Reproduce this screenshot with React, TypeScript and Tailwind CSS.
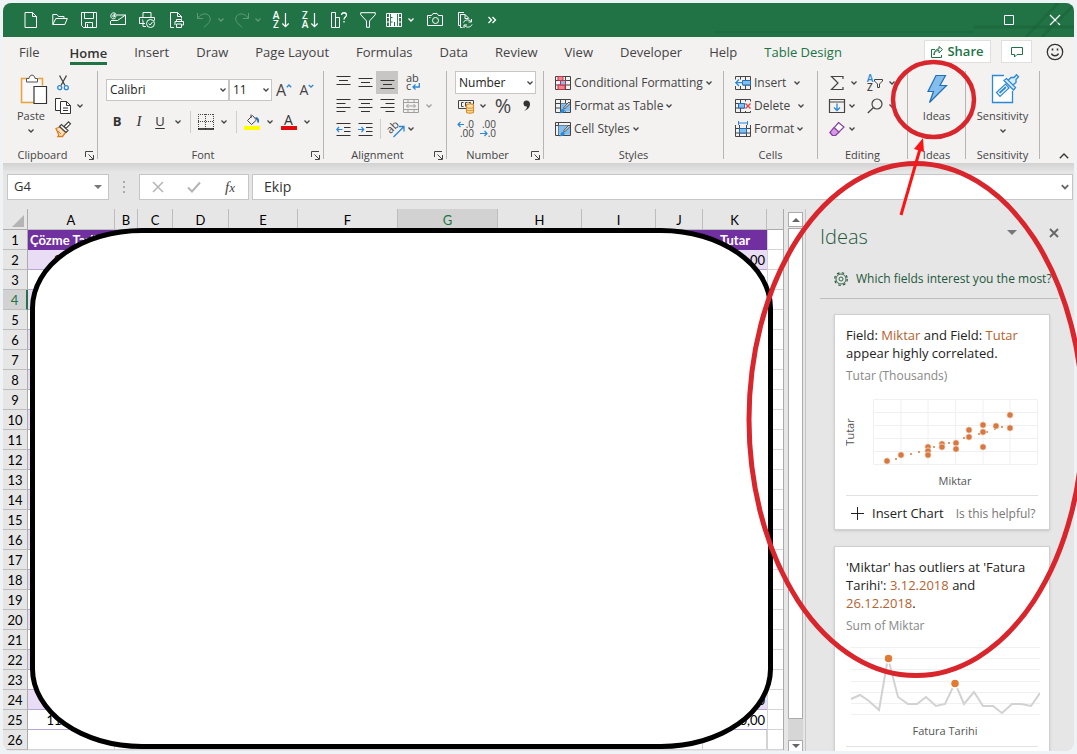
import React from 'react'

type IconProps = {
  children: React.ReactNode
  className?: string
  box?: string
}

const Icon: React.FC<IconProps> = ({ children, className = 'size-4', box = '0 0 16 16' }) => (
  <svg viewBox={box} className={`shrink-0 overflow-visible ${className}`} fill="none" stroke="currentColor" aria-hidden="true">
    {children}
  </svg>
)

const Chevron = ({ className = 'text-[#444]' }: { className?: string }) => (
  <svg viewBox="0 0 8 6" className={`w-2 h-1.5 shrink-0 ${className}`} fill="none" stroke="currentColor" strokeWidth="1.3" aria-hidden="true">
    <path d="M1.5 1.5 4 4l2.5-2.5" />
  </svg>
)

type ToolProps = {
  label: string
  className?: string
  children: React.ReactNode
}

const Tool = ({ label, className = 'w-[22px] h-[23px]', children }: ToolProps) => (
  <button type="button" aria-label={label} className={`flex shrink-0 items-center justify-center ${className}`}>
    {children}
  </button>
)

/* ---------- title bar ---------- */

const SortIcon = ({ top, bottom }: { top: string; bottom: string }) => (
  <Icon>
    <text x="3" y="7" fontSize="10" fontWeight="600" fill="currentColor" stroke="none" textAnchor="middle">{top}</text>
    <text x="3" y="16" fontSize="10" fontWeight="600" fill="currentColor" stroke="none" textAnchor="middle">{bottom}</text>
    <path d="M12.500 1v13.500M9.300 11.500l3.200 3.200 3.200-3.200" strokeWidth="1.200" />
  </Icon>
)

const TitleBar = () => (
  <header className="relative flex h-[34px] shrink-0 items-center bg-[#217346] pl-[13px] text-white">
    {/* faint window pattern */}
    <svg viewBox="0 0 420 34" className="pointer-events-none absolute right-0 top-0 h-[34px] w-[420px]" fill="none" stroke="#1b643b" aria-hidden="true">
      <path d="M320 24h100" strokeWidth="3" opacity=".6" />
      <path d="m372 34 32-34M388 34l32-32" strokeWidth="3" opacity=".6" />
      <path d="M60 29h260" strokeWidth="2" opacity=".4" />
    </svg>
    <Tool label="New" className="w-[29px] h-8">
      <Icon><path d="M2 .5h7.500l4 4v11H2zM9.500.5v4h4" /></Icon>
    </Tool>
    <Tool label="Open" className="w-[29px] h-8">
      <Icon><path d="M.8 12.500v-10H5l1.500 2h5.500v2M.8 12.500l3-6h11.500l-2.500 6z" /></Icon>
    </Tool>
    <Tool label="Save" className="w-[29px] h-8">
      <Icon><path d="M.5.5h15v15h-13l-2-2zM3.500.5v6h9v-6M4.500 15.500v-5h7v5M6.500 12v3.500" /></Icon>
    </Tool>
    <Tool label="Email" className="w-[29px] h-8">
      <Icon>
        <path d="M7 3h8.500v9.500H.5V9M7.500 8.500l8-5.500" />
        <path d="M5.500 6C4 7.500.8 7 .8 3.800.8.200 6.200-.2 6.200 3.300c0 2-1.500 2-1.500.7V2M4.700 4c0 1.500-2 1.500-2 0s2-1.500 2 0M1 8.500h6.500" />
      </Icon>
    </Tool>
    <Tool label="Quick Print" className="w-[29px] h-8">
      <Icon>
        <path d="M4 5.500v-5h8v5M6 11.500H.5v-6h15v3M4 8.500v6h3M3 8h1" />
        <circle cx="11.500" cy="11.500" r="4" />
        <path d="m9.700 11.500 1.500 1.500 2.300-3" />
      </Icon>
    </Tool>
    <Tool label="Print Preview" className="w-[30px] h-8">
      <Icon>
        <path d="M6 15.500H2.500V.5h7l4 4v2M9.500.5v4h4" />
        <path d="M8.500 9.500v-2h5v2M7 13V9.500h8.500V13h-2M8.500 12h5v3.500h-5z" />
      </Icon>
    </Tool>
    <Tool label="Undo" className="w-[26px] h-8 text-[#5d9b79]">
      <Icon><path d="M1.500 1v5.500H7M1.500 6.500C4 2.500 8 1 11.500 2.500c3 1.500 3.500 5.500 1.500 8l-5 5" /></Icon>
    </Tool>
    <Chevron className="text-[#5d9b79]" />
    <Tool label="Redo" className="w-[33px] h-8 text-[#5d9b79]">
      <Icon><path d="M14.500 1v5.500H9M14.500 6.500C12 2.500 8 1 4.500 2.500c-3 1.500-3.500 5.500-1.500 8l5 5" /></Icon>
    </Tool>
    <Chevron className="-ml-1 text-[#5d9b79]" />
    <Tool label="Sort Ascending" className="ml-1 w-[30px] h-8">
      <SortIcon top="A" bottom="Z" />
    </Tool>
    <Tool label="Sort Descending" className="w-[28px] h-8">
      <SortIcon top="Z" bottom="A" />
    </Tool>
    <Tool label="Chart Help" className="w-[30px] h-8">
      <Icon>
        <path d="M.5.5h4v15h-4zM4.500 5.500h4v10h-4" />
        <path d="M10.500 3c0-3 5-3 5 0 0 2-2.500 2-2.500 4.500M13 9v1.500" strokeWidth="1.300" />
      </Icon>
    </Tool>
    <Tool label="Filter" className="w-[27px] h-8">
      <Icon><path d="M.7.7h14.600v2L9.500 9v6.300h-3V9L.7 2.700z" /></Icon>
    </Tool>
    <Tool label="Freeze Panes" className="w-[25px] h-8">
      <Icon>
        <path d="M.5 1.500h15v13H.5z" />
        <path d="M5 2h6v12H5z" fill="currentColor" stroke="none" />
        <path d="M3.500 1.500v13M12.500 1.500v13M.5 5.500h3M.5 10h3M12.500 5.500h3M12.500 10h3" strokeWidth="1.200" />
        <path d="M8.500 10v4M5 5.500h1.500M5 10h1.500" stroke="#217346" />
      </Icon>
    </Tool>
    <Chevron className="ml-px text-white" />
    <Tool label="Camera" className="ml-[5px] w-[30px] h-8">
      <Icon>
        <path d="M.5 3.500h4l1.500-2h4l1.500 2h4v10H.5z" />
        <circle cx="8.500" cy="8.500" r="3" />
        <path d="M2 5.500h1.500" />
      </Icon>
    </Tool>
    <Tool label="Refresh All" className="w-[29px] h-8">
      <Icon>
        <path d="M3 13.500H1.500V.5H7M5.500 15.500h-2V2.500h4.500l4 4M8 2.500v4h3.500" />
        <path d="M6.500 10.500c1-3 5.500-3.500 7.500-1M14.500 7v3h-3M15 12.500c-1 3-5.500 3.500-7.500 1M7 16v-3h3" />
      </Icon>
    </Tool>
    <Tool label="More commands" className="w-[26px] h-8">
      <Icon className="w-2.5 h-2" box="0 0 10 8"><path d="m1.500 1 3 3-3 3M5.500 1l3 3-3 3" strokeWidth="1.300" /></Icon>
    </Tool>
    <div className="flex-1" />
    <Tool label="Maximize" className="w-[54px] h-8">
      <Icon className="w-2.5 h-2.5" box="0 0 10 10"><path d="M.5.5h9v9h-9z" /></Icon>
    </Tool>
    <Tool label="Close" className="w-[38px] h-8">
      <Icon className="w-3 h-3" box="0 0 12 12"><path d="m1 1 10 10m0-10L1 11" strokeWidth="1.200" /></Icon>
    </Tool>
  </header>
)

/* ---------- tabs ---------- */

const TABS = ['File', 'Home', 'Insert', 'Draw', 'Page Layout', 'Formulas', 'Data', 'Review', 'View', 'Developer', 'Help', 'Table Design']

const TabBar = () => (
  <div className="flex h-[29px] shrink-0 items-center bg-[#f3f2f1] pl-4 pr-2.5 text-[13px]">
    <nav className="flex flex-1 items-center gap-[27px] whitespace-nowrap">
      {TABS.map((tab) => {
        if (tab === 'Home') {
          return (
            <button key={tab} type="button" className="ml-[3px] h-[27px] border-b-3 border-[#217346] pt-[3px] font-semibold leading-6 text-[#333]">
              {tab}
            </button>
          )
        }
        return (
          <button key={tab} type="button" className={`leading-6 ${tab === 'Table Design' ? 'text-[#217346]' : 'text-[#444]'}`}>
            {tab}
          </button>
        )
      })}
    </nav>
    <button type="button" className="flex h-[23px] w-[67px] items-center justify-center gap-1 border border-[#e1dfdd] bg-white font-semibold text-[#217346]">
      <Icon className="size-3" box="0 0 12 12">
        <path d="M4 3.500H.5v8h10V9M3 9c0-3 2-4.500 5-4.500V7L11.500 3.500 8 .5V3C5 3 3 5 3 9z" />
      </Icon>
      Share
    </button>
    <Tool label="Comments" className="ml-2.5 h-[23px] w-[31px] border border-[#e1dfdd] bg-white text-[#217346]">
      <Icon className="w-3 h-3" box="0 0 12 12"><path d="M.5 1.500h11v7H6L3.500 11V8.500h-3z" /></Icon>
    </Tool>
    <Tool label="Feedback" className="ml-[14px] h-[23px] w-[18px] text-[#333]">
      <Icon className="size-[18px]" box="0 0 18 18">
        <circle cx="9" cy="9" r="7.700" strokeWidth="1.300" />
        <path d="M5.500 10.500c1 3 6 3 7 0" strokeWidth="1.300" />
        <path d="M6.500 5.500v2M11.500 5.500v2" strokeWidth="1.600" />
      </Icon>
    </Tool>
  </div>
)

/* ---------- ribbon ---------- */

type GroupProps = {
  title: string
  width: string
  launcher?: boolean
  children: React.ReactNode
}

const Group: React.FC<GroupProps> = ({ title, width, launcher = false, children }) => (
  <>
    <section aria-label={title} className={`shrink-0 ${width}`}>
      <div className="h-[76px]">{children}</div>
      <div className="flex h-4 items-center text-[11px] text-[#444]">
        <span className="flex-1 text-center">{title}</span>
        {launcher && (
          <Tool label={`${title} settings`} className="w-[15px] h-4">
            <Icon className="size-[9px]" box="0 0 9 9"><path d="M.5 6V.5H8M3.500 3.500l4.500 4.500M8.500 4v4.500H4" /></Icon>
          </Tool>
        )}
      </div>
    </section>
    <div className="h-[88px] w-px shrink-0 bg-[#b8b6b4]" />
  </>
)

type DropProps = { label: string; value: string; className: string }

const Drop = ({ label, value, className }: DropProps) => (
  <div className={`relative ${className}`}>
    <select aria-label={label} defaultValue={value} className="block h-full w-full appearance-none border border-[#c8c6c4] bg-white pl-[3px] text-xs text-[#222]">
      <option>{value}</option>
    </select>
    <span className="pointer-events-none absolute inset-y-0 right-0.5 flex items-center">
      <Chevron />
    </span>
  </div>
)

const Clipboard = () => (
  <Group title="Clipboard" width="w-[94px]" launcher>
    <div className="flex pl-[7px]">
      <button type="button" className="flex w-[42px] flex-col items-center pt-[3px] text-[11px] text-[#444]">
        <Icon className="ml-[5px] w-7 h-8" box="0 0 28 32">
          <path d="M8 4.500H1.500v24H14M18 4.500h4.500v7" stroke="#e8a33d" strokeWidth="1.500" />
          <path d="M3 6h18v6h-7v15H3z" fill="#faf9f8" stroke="none" />
          <path d="M6.500 8V4.500H9C9.500 0 14.500 0 15 4.500h2.500V8z" fill="#fff" stroke="#555" />
          <path d="M14 12.500h12.500v17H14z" fill="#fff" stroke="#333" strokeWidth="1.200" />
        </Icon>
        <span className="leading-5">Paste</span>
        <span className="pt-0.5"><Chevron /></span>
      </button>
      <div className="flex flex-col">
        <Tool label="Cut">
          <Icon>
            <path d="M4.500.5 10 10.500M11.500.5 6 10.500" stroke="#444" strokeWidth="1.300" />
            <circle cx="4.700" cy="12.700" r="2" stroke="#2b88d8" strokeWidth="1.300" />
            <circle cx="11.300" cy="12.700" r="2" stroke="#2b88d8" strokeWidth="1.300" />
          </Icon>
        </Tool>
        <div className="flex items-center gap-0.5">
          <Tool label="Copy">
            <Icon className="size-4 text-[#333]">
              <path d="M5 12.500H.5V.5h5l1 1M5.500 3.500h6l4 4v8h-10z" fill="#fff" />
              <path d="M11.500 3.500v4h4M8 10h5M8 12.500h5" />
            </Icon>
          </Tool>
          <Chevron />
        </div>
        <Tool label="Format Painter">
          <Icon>
            <path d="M1 7.500 5 6l5.500 5.500-3 4H3c1-1.500 1-2 .5-2.500z" fill="#fce0c0" stroke="#d97b1c" strokeWidth="1.300" />
            <path d="m4.500 5.500 2-2 6.500 6-2 2zM9 5.500 13.500.8l2 2L11 7.500z" fill="#fff" stroke="#444" strokeWidth="1.200" />
            <path d="m3 10 3 3" stroke="#d97b1c" />
          </Icon>
        </Tool>
      </div>
    </div>
  </Group>
)

const FontGroup = () => (
  <Group title="Font" width="w-[225px]" launcher>
    <div className="flex items-center pl-2 pt-2 text-[#444]">
      <Drop label="Font" value="Calibri" className="h-[22px] w-[123px]" />
      <Drop label="Font size" value="11" className="h-[22px] w-[43px]" />
      <Tool label="Increase font size" className="w-6 h-[22px]">
        <span className="text-base leading-5">A</span>
        <Icon className="mb-2 w-1.5 h-1.5 text-[#2b88d8]" box="0 0 6 6"><path d="M.8 4.200 3 2l2.200 2.200" strokeWidth="1.300" /></Icon>
      </Tool>
      <Tool label="Decrease font size" className="w-[22px] h-[22px]">
        <span className="text-sm leading-5">A</span>
        <Icon className="mb-2 w-1.5 h-1.5 text-[#2b88d8]" box="0 0 6 6"><path d="M.8 2 3 4.200 5.200 2" strokeWidth="1.300" /></Icon>
      </Tool>
    </div>
    <div className="flex items-center pl-2 pt-[9px] text-[13px] text-[#333]">
      <Tool label="Bold"><b>B</b></Tool>
      <Tool label="Italic"><i className="font-['Liberation_Serif',serif] text-[15px]">I</i></Tool>
      <Tool label="Underline" className="w-5 h-[23px]"><span className="underline underline-offset-2">U</span></Tool>
      <Tool label="Underline style" className="w-4 h-[23px]"><Chevron /></Tool>
      <div className="ml-1 h-[22px] w-px bg-[#d0cecc]" />
      <Tool label="Borders" className="ml-px w-7 h-[23px]">
        <Icon>
          <path d="M.5 0v15M15.500 0v15M7.500 0v15M0 .5h16M0 7.500h16" stroke="#444" strokeDasharray="1 1" />
          <path d="M0 15h16" stroke="#111" strokeWidth="1.500" />
        </Icon>
      </Tool>
      <Chevron />
      <div className="ml-2 h-[22px] w-px bg-[#d0cecc]" />
      <Tool label="Fill Color" className="ml-px w-7 h-[23px]">
        <Icon>
          <path d="M3.500 6.500 8.500 1.500l4 4.500-5 4.500zM7 .5V4" stroke="#444" />
          <path d="M11.500 4c2.500 0 3 2 2.500 4.500" stroke="#1e6fb8" strokeWidth="1.800" />
          <path d="M0 12h16v4H0z" fill="#ffff00" stroke="none" />
        </Icon>
      </Tool>
      <Chevron />
      <Tool label="Font Color" className="w-[29px] h-[23px]">
        <span className="flex w-4 flex-col items-center">
          <span className="text-sm leading-[13px]">A</span>
          <span className="h-1 w-4 bg-[#e00b0b]" />
        </span>
      </Tool>
      <Chevron />
    </div>
  </Group>
)

const Lines = ({ d }: { d: string }) => (
  <Icon className="size-[15px] text-[#333]" box="0 0 15 15"><path d={d} strokeWidth="1.200" /></Icon>
)

const AlignGroup = () => (
  <Group title="Alignment" width="w-[122px]" launcher>
    <div className="flex h-[23px] items-center pl-2">
      <Tool label="Top Align"><Lines d="M.5 1.500h14M3 5.500h9M.5 9.500h14" /></Tool>
      <Tool label="Middle Align"><Lines d="M.5 3.500h14M3 7.500h9M.5 11.500h14" /></Tool>
      <Tool label="Bottom Align" className="h-[23px] w-[22px] bg-[#c8c6c4]"><Lines d="M.5 5.500h14M3 9.500h9M.5 13.500h14" /></Tool>
      <Tool label="Wrap Text" className="ml-[7px] w-4 h-[23px]">
        <Icon>
          <text x="1" y="7" fontSize="11" fill="#444" stroke="none">ab</text>
          <text x="1" y="15" fontSize="11" fill="#444" stroke="none">c</text>
          <path d="M14.300 8v4H8M10.500 9.500 8 12l2.500 2.500" stroke="#2b88d8" strokeWidth="1.300" />
        </Icon>
      </Tool>
    </div>
    <div className="flex h-[23px] items-center pl-2">
      <Tool label="Align Left"><Lines d="M.5 1.500h14M.5 5.500h9M.5 9.500h14M.5 13.500h9" /></Tool>
      <Tool label="Center"><Lines d="M.5 1.500h14M3 5.500h9M.5 9.500h14M3 13.500h9" /></Tool>
      <Tool label="Align Right"><Lines d="M.5 1.500h14M5.500 5.500h9M.5 9.500h14M5.500 13.500h9" /></Tool>
      <Tool label="Merge and Center" className="ml-[5px] w-4 h-[23px]">
        <Icon className="size-4 text-[#a19f9d]">
          <path d="M.5 1.500h15v13H.5zM.5 4.500h15M.5 11.500h15M5 1.500v3M11 1.500v3M5 11.500v3M11 11.500v3M3.500 8h9M5.500 6l-2 2 2 2M10.500 6l2 2-2 2" />
        </Icon>
      </Tool>
      <span className="ml-1.5"><Chevron className="text-[#a19f9d]" /></span>
    </div>
    <div className="flex h-[24px] items-center pl-2">
      <Tool label="Decrease Indent">
        <Icon className="size-[15px] text-[#333]" box="0 0 15 15">
          <path d="M.5 1.500h14M8 5.500h6.500M8 9.500h6.500M.5 13.500h14" strokeWidth="1.200" />
          <path d="M6.500 7.500h-6M3 5 .8 7.500 3 10" stroke="#2b88d8" strokeWidth="1.200" />
        </Icon>
      </Tool>
      <Tool label="Increase Indent">
        <Icon className="size-[15px] text-[#333]" box="0 0 15 15">
          <path d="M.5 1.500h14M8 5.500h6.500M8 9.500h6.500M.5 13.500h14" strokeWidth="1.200" />
          <path d="M0 7.500h6M3.500 5l2.200 2.500L3.500 10" stroke="#2b88d8" strokeWidth="1.200" />
        </Icon>
      </Tool>
      <div className="ml-1 h-5 w-px bg-[#d0cecc]" />
      <Tool label="Orientation" className="ml-1.5 w-[18px] h-[23px]">
        <Icon className="size-[18px]" box="0 0 18 18">
          <text x="1" y="12" fontSize="11" fill="#444" stroke="none" transform="rotate(-45 5 10)">ab</text>
          <path d="m6.500 17 10-10M12 6.500h5v5" stroke="#2b88d8" strokeWidth="1.300" />
        </Icon>
      </Tool>
      <span className="ml-0.5"><Chevron /></span>
    </div>
  </Group>
)

const Decimals = ({ increase = false }: { increase?: boolean }) => (
  <Icon className="w-4 h-[18px]" box="0 0 16 18">
    <text x="16" y="8" fontSize="10" fill="#444" stroke="none" textAnchor="end">{increase ? '.0' : '.00'}</text>
    <text x="16" y="17" fontSize="10" fill="#444" stroke="none" textAnchor="end">{increase ? '.00' : '.0'}</text>
    <path d={increase ? 'M6 4.500H0M2.500 2 0 4.500 2.500 7' : 'M0 13.500h7M4.500 11 7 13.500 4.500 16'} stroke="#2b88d8" strokeWidth="1.200" />
  </Icon>
)

const NumberGroup = () => (
  <Group title="Number" width="w-[96px]" launcher>
    <div className="pl-2">
      <Drop label="Number format" value="Number" className="h-[23px] w-[81px]" />
      <div className="flex h-[23px] items-center">
        <Tool label="Accounting Format">
          <Icon>
            <path d="M8 10.500H.5v-8h15V6M5.500 4.500H3.500v4h2M9.500 4.500h-2v4M12.500 6.500v-2h-2" stroke="#444" />
            <path d="M8.500 7c0-1.500 7-1.500 7 0v7c0 1.500-7 1.500-7 0z" fill="#fce0b8" stroke="#d98b1c" strokeWidth="1.200" />
            <path d="M8.500 9.500c1 1 6 1 7 0M8.500 12c1 1 6 1 7 0" stroke="#d98b1c" />
          </Icon>
        </Tool>
        <span className="ml-0.5"><Chevron /></span>
        <Tool label="Percent Style" className="ml-1 w-6 h-[23px] text-xl text-[#444]">%</Tool>
        <Tool label="Comma Style">
          <Icon className="w-2.5 h-3 text-[#333]" box="0 0 10 12">
            <path d="M5 .5a3 3 0 1 0 1 6C6 8.500 4.500 10 2.500 11c4-1 6.500-3.500 6.500-7A3.700 3.700 0 0 0 5 .5z" fill="currentColor" stroke="none" />
          </Icon>
        </Tool>
      </div>
      <div className="flex h-6 items-center">
        <Tool label="Increase Decimal"><Decimals increase /></Tool>
        <Tool label="Decrease Decimal"><Decimals /></Tool>
      </div>
    </div>
  </Group>
)

const TableGlyph = ({ children }: { children?: React.ReactNode }) => (
  <Icon>
    <path d="M.5 1.500h15v13H.5zM.5 5.500h15M.5 10h15M5.500 1.500v13M10.500 1.500v13" stroke="#444" />
    {children}
  </Icon>
)

type RowButtonProps = { label: string; icon: React.ReactNode; gap?: string }

const RowButton = ({ label, icon, gap = 'gap-0.5' }: RowButtonProps) => (
  <button type="button" className={`flex h-[23px] items-center whitespace-nowrap text-xs text-[#444] ${gap}`}>
    <span className="flex items-center gap-[3px]">
      {icon}
      {label}
    </span>
    <Chevron />
  </button>
)

const brush = (
  <>
    <path d="M6 5.500h9v8H6z" fill="#83beec" stroke="none" />
    <path d="M15 5.500 9.500 11l-1-1L14 4z" fill="#fff" stroke="#444" />
    <path d="M4 15c2 0 1-3.500 3.500-4 2-.3 3 1.500 1.500 3-1 1-3 1.500-5 1z" fill="#2b88d8" stroke="none" />
  </>
)

const StylesGroup = () => (
  <Group title="Styles" width="w-[179px]">
    <div className="flex flex-col items-start pl-[11px]">
      <RowButton
        label="Conditional Formatting"
        icon={(
          <TableGlyph>
            <path d="M3 1.500h5v4H3zM3 10h7v4.500H3z" fill="#f4838a" stroke="#c4314b" />
            <path d="M5.500 5.500h5V10h-5z" fill="#83beec" stroke="#c4314b" />
          </TableGlyph>
        )}
      />
      <RowButton label="Format as Table" icon={<TableGlyph>{brush}</TableGlyph>} />
      <RowButton
        label="Cell Styles"
        icon={(
          <Icon>
            <path d="M.5 1.500h15v13H.5zM3.500 1.500v13M.5 4.500h15" stroke="#444" />
            <path d="M3.500 4.500H15v9H3.500z" fill="#83beec" stroke="none" />
            {brush}
          </Icon>
        )}
      />
    </div>
  </Group>
)

const CellsGroup = () => (
  <Group title="Cells" width="w-[93px]">
    <div className="flex flex-col items-start pl-[11px]">
      <RowButton
        label="Insert"
        gap="gap-[7px]"
        icon={(
          <TableGlyph>
            <path d="M0 4.500h8v6.500H0z" fill="#f3f2f1" stroke="none" />
            <path d="M7.500 5.500h8V10h-8z" fill="#83beec" stroke="#1e6fb8" />
            <path d="M8 7.700H1M4 4.500.8 7.700 4 11" stroke="#2b88d8" strokeWidth="1.300" />
          </TableGlyph>
        )}
      />
      <RowButton
        label="Delete"
        gap="gap-[7px]"
        icon={(
          <TableGlyph>
            <path d="M9.500 3.500H16V13H9.500z" fill="#f3f2f1" stroke="none" />
            <path d="M3.500 5.500h6V10h-6z" fill="#83beec" stroke="#1e6fb8" />
            <path d="m10.500 5.500 5 5m0-5-5 5" stroke="#e0454b" strokeWidth="1.400" />
          </TableGlyph>
        )}
      />
      <RowButton
        label="Format"
        icon={(
          <Icon>
            <path d="M.5 4v11.500h15V4M.5 7.500h15M.5 12h15M4.500 4v11.500M11.500 4v11.500" stroke="#444" />
            <path d="M4.500 7.500h7V12h-7z" fill="#83beec" stroke="#1e6fb8" />
            <path d="M3.500 0v4M12.500 0v4M3.500 2h9" stroke="#2b88d8" />
          </Icon>
        )}
      />
    </div>
  </Group>
)

const EditingGroup = () => (
  <Group title="Editing" width="w-[89px]">
    <div className="flex h-[23px] items-center pl-2">
      <Tool label="AutoSum">
        <Icon className="w-3.5 h-4 text-[#444]" box="0 0 14 16"><path d="M13 4V1.500H1.500L8 8l-6.500 6.500H13V12" strokeWidth="1.200" /></Icon>
      </Tool>
      <span className="ml-0.5"><Chevron /></span>
      <Tool label="Sort and Filter" className="ml-1.5 w-[22px] h-[23px]">
        <Icon>
          <text x="3" y="7" fontSize="10" fontWeight="600" fill="#2b88d8" stroke="none" textAnchor="middle">A</text>
          <text x="3" y="16" fontSize="10" fontWeight="600" fill="#444" stroke="none" textAnchor="middle">Z</text>
          <path d="M7.500 4.500h8V6l-3 3v3.500h-2V9l-3-3z" stroke="#444" />
        </Icon>
      </Tool>
      <span className="ml-0.5"><Chevron /></span>
    </div>
    <div className="flex h-[23px] items-center pl-2">
      <Tool label="Fill">
        <Icon>
          <path d="M.5 1.500h15v13H.5zM.5 4h15" stroke="#444" strokeWidth="1.200" />
          <path d="M8 5.500v7M5 9.500l3 3 3-3" stroke="#2b88d8" strokeWidth="1.300" />
        </Icon>
      </Tool>
      <Chevron />
      <Tool label="Find and Select" className="ml-2 w-[22px] h-[23px]">
        <Icon className="size-4 text-[#444]"><circle cx="10" cy="6" r="5" strokeWidth="1.200" /><path d="M6.500 9.500.8 15" strokeWidth="1.300" /></Icon>
      </Tool>
      <span className="ml-0.5"><Chevron /></span>
    </div>
    <div className="flex h-[23px] items-center pl-2">
      <Tool label="Clear">
        <Icon>
          <path d="M9.500 1.500 15 6l-8.500 8.500h-3L1 11.500z" fill="#fff" stroke="#8a3fa0" strokeWidth="1.200" />
          <path d="m5 6.500 5 4.500-3.500 3.500h-3L1 11.500z" fill="#d59ae3" stroke="#8a3fa0" strokeWidth="1.200" />
        </Icon>
      </Tool>
      <Chevron />
    </div>
  </Group>
)

const Ribbon = () => (
  <div className="flex h-[97px] shrink-0 bg-[#f3f2f1] pt-[5px]">
    <Clipboard />
    <FontGroup />
    <AlignGroup />
    <NumberGroup />
    <StylesGroup />
    <CellsGroup />
    <EditingGroup />
    <Group title="Ideas" width="w-[57px]">
      <button type="button" className="flex w-full flex-col items-center pt-[3px] text-[11px] text-[#444]">
        <Icon className="w-6 h-8" box="0 0 24 32">
          <path d="M11 1.500h9.500L15 11.500h6.500L4.500 28.500l4-11H3z" fill="#83beec" stroke="#1e6fb8" strokeWidth="1.200" />
        </Icon>
        <span className="leading-5">Ideas</span>
      </button>
    </Group>
    <Group title="Sensitivity" width="w-[73px]">
      <button type="button" className="flex w-full flex-col items-center pt-[3px] text-[11px] text-[#444]">
        <Icon className="ml-1 w-7 h-8" box="0 0 28 32">
          <path d="M13 1.500H1.500v27h20V17" fill="#fff" stroke="#2b88d8" strokeWidth="1.300" />
          <path d="m5.500 18.500 9-8.500 3.500 4-9 8.500z" fill="#fff" stroke="#2b88d8" strokeWidth="1.200" />
          <path d="m8.500 19 6.500-6" stroke="#2b88d8" strokeWidth="1.800" />
          <path d="m13 6.500 2.500-2 9 9-2 2.500zM17.500 6 20 3.500h3L25.500.8l2 2-2.500 2.700v3L22 11" fill="#dcedfa" stroke="#2b88d8" strokeWidth="1.300" />
        </Icon>
        <span className="leading-5">Sensitivity</span>
        <span className="pt-0.5"><Chevron /></span>
      </button>
    </Group>
    <div className="flex flex-1 items-end justify-end pb-0.5 pr-1">
      <Tool label="Collapse ribbon" className="w-3 h-2.5">
        <Icon className="w-2.5 h-1.5 text-[#333]" box="0 0 10 6"><path d="M.8 5.200 5 1l4.200 4.200" strokeWidth="1.300" /></Icon>
      </Tool>
    </div>
  </div>
)

/* ---------- formula bar ---------- */

const FormulaBar = () => (
  <div className="flex h-[46px] shrink-0 items-start bg-linear-to-b from-[#d2d2d2] to-[#e6e6e6] to-20% pl-1 pt-[11px]">
    <label className="flex h-[26px] w-[102px] items-center border border-[#c6c6c6] bg-white pr-1.5">
      <input aria-label="Name box" defaultValue="G4" className="w-full min-w-0 flex-1 bg-transparent pl-1.5 text-[13px] text-[#333] outline-none" />
      <Icon className="w-2 h-1 text-[#777]" box="0 0 8 4"><path d="M0 0h8L4 4z" fill="currentColor" stroke="none" /></Icon>
    </label>
    <div className="flex h-[26px] w-[30px] items-center justify-center text-[#aaa]">
      <Icon className="w-0.5 h-3" box="0 0 2 12"><path d="M1 0v12" strokeWidth="2" strokeDasharray="2 3" /></Icon>
    </div>
    <div className="flex h-[26px] w-[110px] items-center justify-around border border-[#c6c6c6] bg-white">
      <Tool label="Cancel"><Icon className="size-3 text-[#b5b5b5]" box="0 0 12 12"><path d="m1 1 10 10m0-10L1 11" strokeWidth="1.500" /></Icon></Tool>
      <Tool label="Enter"><Icon className="w-3.5 h-3 text-[#b5b5b5]" box="0 0 14 12"><path d="m1 6.500 4 4L13 1.500" strokeWidth="2" /></Icon></Tool>
      <Tool label="Insert function">
        <i className="font-['Liberation_Serif',serif] text-[15px] text-[#444]">f<span className="text-[13px]">x</span></i>
      </Tool>
    </div>
    <label className="ml-[3px] mr-px flex h-[26px] flex-1 items-center border border-[#c6c6c6] bg-white pr-[3px]">
      <input aria-label="Formula" defaultValue="Ekip" className="min-w-0 flex-1 bg-transparent pl-[11px] text-sm text-[#333] outline-none" />
      <Icon className="w-2 h-1.5 text-[#666]" box="0 0 8 6"><path d="M.8 1.200 4 4.400l3.200-3.200" strokeWidth="1.800" /></Icon>
    </label>
  </div>
)

/* ---------- sheet ---------- */

const COLUMNS = [
  { name: 'A', width: 87 },
  { name: 'B', width: 23 },
  { name: 'C', width: 35 },
  { name: 'D', width: 56 },
  { name: 'E', width: 69 },
  { name: 'F', width: 100 },
  { name: 'G', width: 100 },
  { name: 'H', width: 84 },
  { name: 'I', width: 74 },
  { name: 'J', width: 47 },
  { name: 'K', width: 64 },
]

const CELLS: Record<string, string> = {
  A1: 'Çözme Tarihi',
  K1: 'Tutar',
  A2: '2.12.2018',
  K2: '1.250,00',
  K3: '980,00',
  K24: '750,00',
  A25: '11.12.2018',
  K25: '1.400,00',
}

const ROWS = Array.from({ length: 26 }, (_, i) => i + 1)

const cellStyle = (row: number, column: string) => {
  if (row === 1) return `bg-[#7030a0] text-white font-bold border-b border-[#7030a0] ${column === 'A' ? 'text-left' : 'text-center'}`
  if (row === 26) return 'bg-white border-b border-r border-[#d4d4d4]'
  return `text-right border-b border-[#b4a7d6] ${row % 2 === 0 ? 'bg-[#e9dcf5]' : 'bg-white'}`
}

const Sheet = () => (
  <div className="relative min-w-0 flex-1 overflow-hidden bg-[#e6e6e6]">
    <table className="w-full table-fixed border-separate border-spacing-0 border-r border-[#ababab] font-['Lato',sans-serif] text-[13px] leading-[18px] text-black">
      <colgroup>
        <col style={{ width: 25 }} />
        {COLUMNS.map((c) => <col key={c.name} style={{ width: c.width }} />)}
        <col />
      </colgroup>
      <thead>
        <tr className="h-[21px]">
          <th aria-label="Select all" className="border-b border-r border-[#ababab] p-0">
            <Icon className="ml-auto mr-[3px] mt-1 size-3 text-[#b4b4b4]" box="0 0 12 12"><path d="M12 0v12H0z" fill="currentColor" stroke="none" /></Icon>
          </th>
          {COLUMNS.map((c) => (
            <th
              key={c.name}
              className={`border-b border-r border-[#bdbdbd] p-0 pt-0.5 font-normal ${c.name === 'G' ? 'bg-[#d2d2d2] text-[#217346]' : ''}`}
            >
              {c.name}
            </th>
          ))}
          <th aria-label="L" className="border-b border-[#ababab] p-0" />
        </tr>
      </thead>
      <tbody>
        {ROWS.map((row) => (
          <tr key={row} className="h-5">
            <th
              className={`border-b border-[#bdbdbd] p-0 pt-px font-normal ${row === 4 ? 'border-r-2 border-r-[#217346] bg-[#d2d2d2] text-[#217346]' : 'border-r border-r-[#ababab]'}`}
            >
              {row}
            </th>
            {COLUMNS.map((c) => (
              <td key={c.name} className={`overflow-hidden whitespace-nowrap px-0.5 pb-0 pt-px ${cellStyle(row, c.name)}`}>
                {CELLS[`${c.name}${row}`]}
              </td>
            ))}
            <td className="border-b border-l border-[#d4d4d4] bg-white p-0" />
          </tr>
        ))}
      </tbody>
    </table>
    {/* blank cover over the data */}
    <div className="absolute bottom-0.5 left-[27px] right-[11px] top-[19px] rounded-[112px/80px] border-5 border-black bg-white" />
  </div>
)

const ScrollBar = () => (
  <div className="flex w-[22px] shrink-0 flex-col border-r border-[#c6c6c6] bg-[#e6e6e6] pl-1 pr-0.5 pt-[3px]">
    <Tool label="Scroll up" className="h-[15px] w-[15px] border border-[#ababab] bg-white">
      <Icon className="w-2 h-1 text-[#666]" box="0 0 8 4"><path d="M0 4h8L4 0z" fill="currentColor" stroke="none" /></Icon>
    </Tool>
    <div className="mt-px w-[15px] flex-1 border border-[#ababab] bg-white" />
    <div className="h-[21px] w-[15px] bg-[#d6d6d6]" />
    <Tool label="Scroll down" className="h-[11px] w-[15px] border border-b-0 border-[#ababab] bg-white">
      <Icon className="w-2 h-1 text-[#666]" box="0 0 8 4"><path d="M0 0h8L4 4z" fill="currentColor" stroke="none" /></Icon>
    </Tool>
  </div>
)

/* ---------- ideas pane ---------- */

const POINTS = [
  [41, 65], [55, 59], [82, 51], [82, 55], [82, 59], [96, 48], [96, 51], [110, 47], [110, 53],
  [123, 34], [123, 41], [137, 29], [137, 36], [137, 51], [150, 30], [164, 19], [164, 32],
]

const TREND = [[50, 63], [65, 58], [73, 56], [88, 51], [103, 47], [118, 42], [125, 41], [133, 38], [141, 36], [149, 33], [156, 31]]

const ScatterChart = () => (
  <svg viewBox="0 0 192 95" className="w-full" role="img" aria-label="Tutar by Miktar">
    <path d="M27.500 3.500h164v65h-164zM27.500 16.500h164M27.500 29.500h164M27.500 42.500h164M27.500 55.500h164M55 3.500v65M82 3.500v65M109.500 3.500v65M137 3.500v65M164 3.500v65" fill="none" stroke="#f0f0f0" />
    {TREND.map(([x, y]) => <circle key={x} cx={x} cy={y} r="1" fill="#d9773a" />)}
    {POINTS.map(([x, y]) => <circle key={`${x}-${y}`} cx={x} cy={y} r="3.200" fill="#d87840" stroke="#fff" strokeWidth=".6" />)}
    <text x="5" y="36" fontSize="11" fill="#555" textAnchor="middle" transform="rotate(-90 5 36)" dominantBaseline="middle">Tutar</text>
    <text x="109" y="89" fontSize="11" fill="#555" textAnchor="middle">Miktar</text>
  </svg>
)

const OutlierChart = () => (
  <svg viewBox="0 0 194 102" className="w-[194px] max-w-none" role="img" aria-label="Miktar by Fatura Tarihi">
    <path d="M5 7.500h189M5 18.500h189M5 29.500h189M5 41.500h189M5 52.500h189M5 63.500h189M5 74.500h189" stroke="#f0f0f0" />
    <path
      d="M5 59l9-4 9 6 10 9L42 18l10 39 10 7h9l9-7 10 9 9-2 10-21 9 21 10-12 9 14h10l9 7 10-9h9l10 2 9-13"
      fill="none"
      stroke="#d2d2d2"
      strokeWidth="2"
    />
    <circle cx="42.500" cy="18.500" r="4.500" fill="#e07a35" stroke="#fff" strokeWidth="1.500" />
    <circle cx="109" cy="43.500" r="4.500" fill="#e07a35" stroke="#fff" strokeWidth="1.500" />
    <text x="99" y="95" fontSize="11" fill="#555" textAnchor="middle">Fatura Tarihi</text>
  </svg>
)

type CardProps = { text: React.ReactNode; subtitle: string; chart: React.ReactNode }

const IdeaCard: React.FC<CardProps> = ({ text, subtitle, chart }) => (
  <article className="border border-[#d0d0d0] bg-white px-[11px] pt-[11px] shadow-sm">
    <p className="text-[13px] leading-[18px] text-[#222]">{text}</p>
    <p className="mt-1.5 text-xs leading-4 text-[#888]">{subtitle}</p>
    {chart}
    <div className="mt-1 flex h-[34px] items-center whitespace-nowrap border-t border-[#e1e1e1] pl-[5px] pt-0.5">
      <button type="button" className="flex items-center gap-2 text-[13px] text-[#222]">
        <Icon className="size-[13px]" box="0 0 13 13"><path d="M6.500 0v13M0 6.500h13" /></Icon>
        Insert Chart
      </button>
      <a href="#feedback" className="ml-3 text-xs text-[#777]">Is this helpful?</a>
    </div>
  </article>
)

const Hit = ({ children }: { children: React.ReactNode }) => <span className="text-[#b5622f]">{children}</span>

const IdeasPane = () => (
  <aside className="w-[268px] shrink-0 overflow-hidden bg-[#e6e6e6] pl-3.5">
    <div className="flex h-[55px] items-center pr-[14px]">
      <h2 className="flex-1 text-xl font-light text-[#22583b]">Ideas</h2>
      <Tool label="Pane options" className="mb-2 mr-[30px] w-3 h-4">
        <Icon className="w-2.5 h-[5px] text-[#777]" box="0 0 10 5"><path d="M0 0h10L5 5z" fill="currentColor" stroke="none" /></Icon>
      </Tool>
      <Tool label="Close pane" className="mb-2 w-3 h-4">
        <Icon className="size-2.5 text-[#666]" box="0 0 10 10"><path d="m1 1 8 8m0-8L1 9" strokeWidth="1.800" /></Icon>
      </Tool>
    </div>
    <button type="button" className="flex h-[34px] w-full items-center gap-2 whitespace-nowrap pb-[5px] pl-3.5 text-xs text-[#22583b]">
      <Icon className="size-3.5" box="0 0 14 14">
        <circle cx="7" cy="7" r="6.300" strokeWidth="1.200" strokeDasharray="2.600 2.350" />
        <circle cx="7" cy="7" r="5" strokeWidth=".9" />
        <circle cx="7" cy="7" r="2" strokeWidth=".9" />
      </Icon>
      Which fields interest you the most?
    </button>
    <div className="mr-4 border-t border-[#bdbdbd]" />
    <div className="ml-3.5 mr-6 mt-[15px] flex flex-col gap-4">
      <IdeaCard
        text={<>Field: <Hit>Miktar</Hit> and Field: <Hit>Tutar</Hit> appear highly correlated.</>}
        subtitle="Tutar (Thousands)"
        chart={<div className="mt-3"><ScatterChart /></div>}
      />
      <IdeaCard
        text={<>'Miktar' has outliers at 'Fatura Tarihi': <Hit>3.12.2018</Hit> and <Hit>26.12.2018</Hit>.</>}
        subtitle="Sum of Miktar"
        chart={<div className="mt-1.5"><OutlierChart /></div>}
      />
    </div>
  </aside>
)

/* hand-drawn callouts, anchored to the right edge of the window */
const Callouts = () => (
  <svg viewBox="0 0 337 640" className="pointer-events-none absolute right-0 top-[50px] h-[640px] w-[337px]" fill="none" aria-hidden="true">
    <ellipse cx="176" cy="369.500" rx="167" ry="256" stroke="#d9252c" strokeWidth="5" />
    <ellipse cx="193.500" cy="49.500" rx="40.500" ry="37.500" stroke="#d9252c" strokeWidth="4.500" />
    <path d="M161 165 180 99" stroke="#fb1414" strokeWidth="3" />
    <path d="m183 88 1 14-10-3z" fill="#fb1414" />
  </svg>
)

export default function App() {
  return (
    <div className="relative h-screen overflow-hidden bg-[#f0f3f5] p-[3px] font-['Open_Sans',sans-serif] text-[#444]">
      <div className="flex h-full flex-col overflow-hidden rounded-lg">
        <TitleBar />
        <TabBar />
        <Ribbon />
        <FormulaBar />
        <main className="flex min-h-0 flex-1">
          <Sheet />
          <ScrollBar />
          <IdeasPane />
        </main>
      </div>
      <Callouts />
    </div>
  )
}
